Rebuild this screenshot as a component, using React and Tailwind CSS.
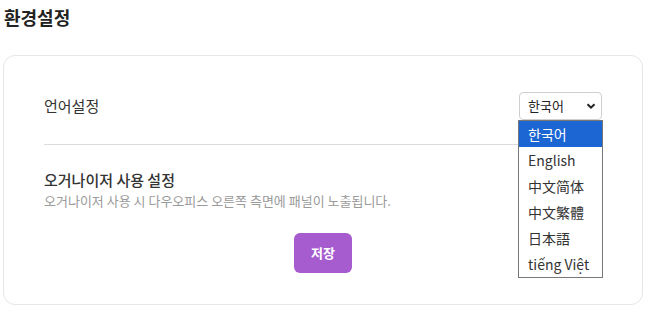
import React from "react";

const font = { fontFamily: '"Noto Sans CJK KR", "Noto Sans", sans-serif' };

export default function App() {
  const langs = ["한국어", "English", "中文简体", "中文繁體", "日本語", "tiếng Việt"];
  return (
    <div className="w-[650px] h-[310px] bg-white text-[#222] overflow-hidden" style={font}>
      <h1 className="pl-[4px] pt-[3px] text-[18px] leading-[28px] font-bold text-[#222]">환경설정</h1>
      <div className="mt-[24px] ml-[3px] w-[640px] h-[250px] border border-[#e6e6e6] rounded-[12px] px-[40px] pt-[36px]">
        <div className="flex items-center justify-between h-[28px]">
          <span className="text-[15px] text-[#333]">언어설정</span>
          <div className="relative">
            <div className="w-[83px] h-[28px] border border-[#cfcfcf] rounded-[4px] flex items-center justify-between pl-[8px] pr-[5px] text-[13px] text-[#222]">
              <span>한국어</span>
              <svg width="10" height="10" viewBox="0 0 10 10">
                <path d="M1.5 3.2 L5 6.7 L8.5 3.2" fill="none" stroke="#222" strokeWidth="2" />
              </svg>
            </div>
            <div className="absolute top-[28px] left-[-1px] w-[85px] border border-[#777] bg-white z-10">
              {langs.map((l, i) => (
                <div
                  key={l}
                  className={
                    "h-[26px] flex items-center pl-[9px] text-[14px] " +
                    (i === 0 ? "bg-[#1c66d4] text-white" : "text-[#333]")
                  }
                >
                  {l}
                </div>
              ))}
            </div>
          </div>
        </div>
        <div className="mt-[24px] h-px bg-[#dcdcdc]" />
        <div className="mt-[25px] text-[15px] leading-[20px] font-medium text-[#333]">오거나이저 사용 설정</div>
        <div className="mt-[1px] text-[13px] leading-[20px] text-[#9a9a9a]">오거나이저 사용 시 다우오피스 오른쪽 측면에 패널이 노출됩니다.</div>
        <div className="flex justify-center mt-[22px]">
          <button className="w-[58px] h-[40px] rounded-[6px] bg-[#a65bcf] text-white text-[13px] font-bold">저장</button>
        </div>
      </div>
    </div>
  );
}
